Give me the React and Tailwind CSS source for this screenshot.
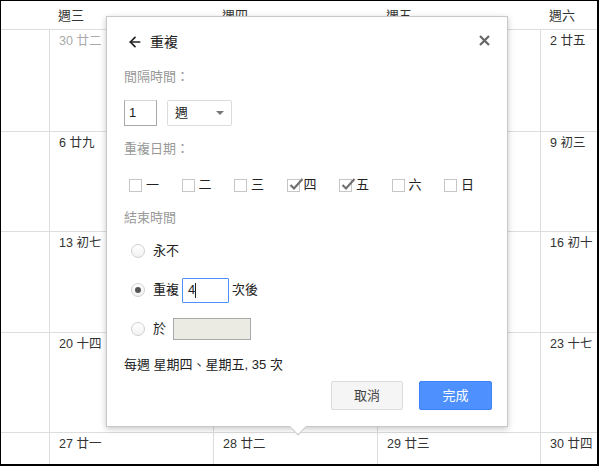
import { ArrowLeft } from 'lucide-react';

const FONT = { fontFamily: '"Liberation Sans", "Noto Sans CJK TC", sans-serif' };

const weeks = [
  { h: 'h-[102px] border-b', cells: [['30 廿二', true], ['31 廿三'], ['1 廿四'], ['2 廿五']] },
  { h: 'h-[100px] border-b', cells: [['6 廿九'], ['7 初一'], ['8 初二'], ['9 初三']] },
  { h: 'h-[101px] border-b', cells: [['13 初七'], ['14 初八'], ['15 初九'], ['16 初十']] },
  { h: 'h-[100px] border-b', cells: [['20 十四'], ['21 十五'], ['22 十六'], ['23 十七']] },
  { h: 'flex-1', cells: [['27 廿一'], ['28 廿二'], ['29 廿三'], ['30 廿四']] },
];

const colW = ['w-[164px] border-r', 'w-[164px] border-r', 'w-[163px] border-r', 'flex-1'];

function Checkbox({ checked, label }) {
  return (
    <div className="w-[52.5px] flex items-center shrink-0">
      <span className="relative w-[13px] h-[13px] border border-[#c6c6c6] bg-white">
        {checked && (
          <svg className="absolute -top-[3px] left-[1px]" width="15" height="14" viewBox="0 0 15 14">
            <path d="M1.5 8 L5 11.5 L13.5 2" fill="none" stroke="#707070" strokeWidth="2.2" />
          </svg>
        )}
      </span>
      <span className="ml-[4px] text-[13px] text-[#222]">{label}</span>
    </div>
  );
}

function Radio({ checked }) {
  return (
    <span className="w-[14px] h-[14px] rounded-full border border-[#d0d0d0] bg-gradient-to-b from-white to-[#f1f1f1] flex items-center justify-center shrink-0">
      {checked && <span className="w-[6px] h-[6px] rounded-full bg-[#555]" />}
    </span>
  );
}

function RepeatDialog() {
  return (
    <div className="absolute left-[105px] top-[15px] w-[402px] h-[411px] bg-white border border-[#c8c8c8] shadow-[0_2px_6px_rgba(0,0,0,0.22)] flex flex-col">
      <div className="h-[50px] flex items-center pl-[20px] pr-[16px] shrink-0">
        <ArrowLeft size={16} strokeWidth={2.6} className="text-[#222]" />
        <span className="ml-[7px] text-[14px] text-[#222]">重複</span>
        <svg className="ml-auto -mt-[4px] mr-[1px]" width="11" height="11" viewBox="0 0 11 11">
          <path d="M1 1 L10 10 M10 1 L1 10" stroke="#666" strokeWidth="2.2" />
        </svg>
      </div>

      <div className="pl-[17px] pr-[15px] flex flex-col text-[13px]">
        <div className="h-[20px] leading-[20px] text-[#999]">間隔時間：</div>

        <div className="mt-[13px] h-[26px] flex items-center">
          <div className="w-[33px] h-[26px] border border-[#a9a9a9] border-t-[#d5d5d5] pl-[4px] flex items-center text-[#222]">1</div>
          <div className="ml-[10px] w-[65px] h-[26px] border border-[#dcdcdc] rounded-[2px] flex items-center pl-[7px] pr-[7px] text-[#222]">
            <span>週</span>
            <svg className="ml-auto" width="8" height="4" viewBox="0 0 8 4">
              <path d="M0 0 L8 0 L4 4 Z" fill="#777" />
            </svg>
          </div>
        </div>

        <div className="mt-[13px] h-[20px] leading-[20px] text-[#999]">重複日期：</div>

        <div className="mt-[16px] h-[20px] flex items-center pl-[5px]">
          <Checkbox label="一" />
          <Checkbox label="二" />
          <Checkbox label="三" />
          <Checkbox label="四" checked />
          <Checkbox label="五" checked />
          <Checkbox label="六" />
          <Checkbox label="日" />
        </div>

        <div className="mt-[13px] h-[20px] leading-[20px] text-[#999]">結束時間</div>

        <div className="mt-[10px] pl-[7px] flex flex-col gap-[13px] text-[#222]">
          <div className="h-[26px] flex items-center">
            <Radio />
            <span className="ml-[8px]">永不</span>
          </div>
          <div className="h-[26px] flex items-center">
            <Radio checked />
            <span className="ml-[8px]">重複</span>
            <div className="ml-[3px] w-[47px] h-[25px] border border-[#4d90fe] rounded-[1px] flex items-center pl-[5px]">
              <span>4</span>
              <span className="w-px h-[15px] bg-[#222]" />
            </div>
            <span className="ml-[3px]">次後</span>
          </div>
          <div className="h-[26px] flex items-center">
            <Radio />
            <span className="ml-[8px]">於</span>
            <div className="ml-[7px] w-[78px] h-[22px] border border-[#a9a9a9] bg-[#ebebe4]" />
          </div>
        </div>

        <div className="mt-[13px] h-[20px] leading-[20px] text-[#222]">每週 星期四、星期五, 35 次</div>

        <div className="mt-[6px] flex justify-end gap-[16px]">
          <button className="w-[72px] h-[29px] rounded-[2px] border border-[#dcdcdc] bg-[#f5f5f5] text-[#444] text-[13px]">取消</button>
          <button className="w-[73px] h-[29px] rounded-[2px] border border-[#3d83f5] bg-[#4d90fe] text-white text-[13px]">完成</button>
        </div>
      </div>

      <div className="absolute left-[185px] -bottom-[7px] w-[12px] h-[12px] rotate-45 bg-white border-r border-b border-[#c8c8c8]" />
    </div>
  );
}

export default function App() {
  return (
    <div style={FONT} className="relative w-[599px] h-[466px] bg-white border-l border-t border-r-2 border-b-2 border-black overflow-hidden">
      <div className="flex flex-col h-full">
        <div className="h-[29px] flex border-b border-[#dddddd] shrink-0 text-[13px] text-[#333]">
          <div className="w-[49px] shrink-0" />
          {['週三', '週四', '週五', '週六'].map((d, i) => (
            <div key={d} className={`${i < 3 ? (i === 2 ? 'w-[163px]' : 'w-[164px]') : 'flex-1'} pl-[8px] pt-[7px] leading-[16px]`}>
              {d}
            </div>
          ))}
        </div>
        {weeks.map((w, ri) => (
          <div key={ri} className={`${w.h} flex border-[#dddddd] shrink-0`}>
            <div className="w-[49px] border-r border-[#dddddd] shrink-0" />
            {w.cells.map(([t, muted], ci) => (
              <div key={ci} className={`${colW[ci]} border-[#dddddd] pl-[9px] pt-[4px] leading-[15px] text-[12.5px] ${muted ? 'text-[#aaa]' : 'text-[#333]'}`}>
                {t}
              </div>
            ))}
          </div>
        ))}
      </div>
      <RepeatDialog />
    </div>
  );
}
